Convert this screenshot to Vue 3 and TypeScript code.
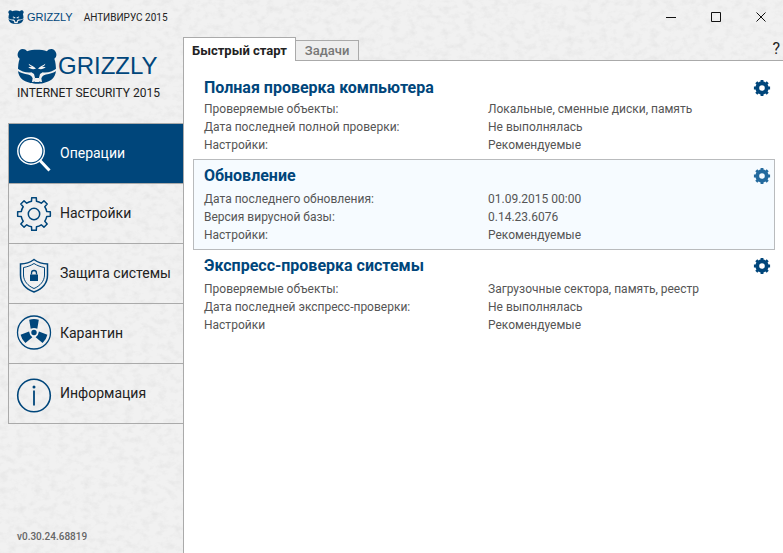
<script setup lang="ts">
import { ref } from 'vue'

interface Row {
  label: string
  value: string
}

interface Task {
  id: string
  title: string
  compact?: boolean
  rows: Row[]
}

const navItems = [
  { id: 'operations', label: 'Операции' },
  { id: 'settings', label: 'Настройки' },
  { id: 'protection', label: 'Защита системы' },
  { id: 'quarantine', label: 'Карантин' },
  { id: 'info', label: 'Информация' },
]

const tabs = ['Быстрый старт', 'Задачи']

const tasks: Task[] = [
  {
    id: 'full',
    title: 'Полная проверка компьютера',
    compact: true,
    rows: [
      { label: 'Проверяемые объекты:', value: 'Локальные, сменные диски, память' },
      { label: 'Дата последней полной проверки:', value: 'Не выполнялась' },
      { label: 'Настройки:', value: 'Рекомендуемые' },
    ],
  },
  {
    id: 'update',
    title: 'Обновление',
    rows: [
      { label: 'Дата последнего обновления:', value: '01.09.2015 00:00' },
      { label: 'Версия вирусной базы:', value: '0.14.23.6076' },
      { label: 'Настройки:', value: 'Рекомендуемые' },
    ],
  },
  {
    id: 'express',
    title: 'Экспресс-проверка системы',
    rows: [
      { label: 'Проверяемые объекты:', value: 'Загрузочные сектора, память, реестр' },
      { label: 'Дата последней экспресс-проверки:', value: 'Не выполнялась' },
      { label: 'Настройки', value: 'Рекомендуемые' },
    ],
  },
]

const activeNav = ref('operations')
const activeTab = ref(0)
const activeTask = ref('update')

// Outline of an eight-toothed gear; spans are half-angles in degrees.
function gear(cx: number, cy: number, outer: number, inner: number, tip: number, root: number): string {
  const at = (r: number, deg: number) => {
    const a = (deg * Math.PI) / 180
    return `${(cx + r * Math.sin(a)).toFixed(2)} ${(cy - r * Math.cos(a)).toFixed(2)}`
  }
  let d = ''
  for (let i = 0; i < 8; i++) {
    const c = i * 45
    d += `${i ? 'L' : 'M'}${at(inner, c - root)}L${at(outer, c - tip)}L${at(outer, c + tip)}L${at(inner, c + root)}`
    d += `A${inner} ${inner} 0 0 1 ${at(inner, c + 45 - root)}`
  }
  return d + 'Z'
}

const navGear = gear(18, 22, 16.5, 13, 8, 11)
const taskGear = gear(8, 8, 8.2, 6.6, 10, 13)
</script>

<template>
  <div class="window">
    <svg class="texture" aria-hidden="true">
      <filter id="plaster" x="0" y="0" width="100%" height="100%">
        <feTurbulence type="fractalNoise" baseFrequency="0.12 0.16" numOctaves="5" seed="8" />
        <feColorMatrix values="0 0 0 0 0.4  0 0 0 0 0.4  0 0 0 0 0.4  0.3 0 0 0 -0.13" />
      </filter>
      <rect width="100%" height="100%" filter="url(#plaster)" />
    </svg>

    <svg class="defs" aria-hidden="true">
      <symbol id="bear" viewBox="0 0 120 106">
        <path fill="#00467b" d="M8 31C3 27 1 22 2 16 4 7 10 2 17 2c6 0 10 2 13 7C39 5 50 4 60 4s21 1 30 5c3-5 7-7 13-7 7 0 13 5 15 14 1 6-1 11-6 15 4 10 5 24 5 36-1 10-5 19-12 26-7 6-16 9-25 11-7 2-13 2-20 2s-13 0-20-2c-9-2-18-5-25-11C8 86 4 77 3 67 3 55 4 41 8 31z" />
        <path fill="#f1f1f1" d="M0 60C13 70 29 74 43 72l8 5 3 11-4 13h-5l2-11c-3-8-10-12-22-13C14 75 6 71 0 66zM120 60C107 70 91 74 77 72l-8 5-3 11 4 13h5l-2-11c3-8 10-12 22-13 11-2 19-6 25-11z" />
        <path fill="#f1f1f1" d="M35 46c7 6 17 7 22 15-9 3-18 1-23-5h11c-5-2-9-5-10-10zM85 46c-7 6-17 7-22 15 9 3 18 1 23-5H75c5-2 9-5 10-10zM53 89h14l3 7-3 5H53l-3-5z" />
      </symbol>
    </svg>

    <header class="titlebar">
      <svg class="mini-bear" aria-hidden="true"><use href="#bear" /></svg>
      <span class="mini-name">GRIZZLY</span>
      <span class="product">АНТИВИРУС 2015</span>
      <div class="controls">
        <button type="button" aria-label="Свернуть">
          <svg viewBox="0 0 12 12"><path d="M1 6.500H11" /></svg>
        </button>
        <button type="button" aria-label="Развернуть">
          <svg viewBox="0 0 12 12"><path d="M1.500 1.500H10.500V10.500H1.500Z" /></svg>
        </button>
        <button type="button" aria-label="Закрыть">
          <svg viewBox="0 0 12 12"><path d="M1.500 1.500L10.500 10.500M10.500 1.500L1.500 10.500" /></svg>
        </button>
      </div>
    </header>

    <div class="body">
      <aside class="sidebar">
        <div class="brand">
          <div class="brand-top">
            <svg class="big-bear" aria-hidden="true"><use href="#bear" /></svg>
            <span class="brand-name">GRIZZLY</span>
          </div>
          <div class="brand-sub">INTERNET SECURITY 2015</div>
        </div>

        <nav class="nav">
          <button
            v-for="item in navItems"
            :key="item.id"
            type="button"
            class="nav-item"
            :class="{ active: item.id === activeNav }"
            @click="activeNav = item.id"
          >
            <svg class="nav-icon" viewBox="0 0 36 44" aria-hidden="true">
              <g v-if="item.id === 'operations'">
                <circle cx="15" cy="19" r="13.200" stroke-width="1.400" />
                <circle cx="15" cy="19" r="11.300" class="solid" stroke="none" />
                <path d="M24 28.500L33.500 38.500" stroke-width="3" />
              </g>
              <g v-else-if="item.id === 'settings'">
                <path :d="navGear" stroke-width="1.500" stroke-linejoin="round" />
                <circle cx="18" cy="22" r="5.700" stroke-width="1.500" />
              </g>
              <g v-else-if="item.id === 'protection'">
                <path d="M18 7.500C14 10.500 9 12 4.500 12V23C4.500 31 10 37 18 40 26 37 31.500 31 31.500 23V12C27 12 22 10.500 18 7.500Z" stroke-width="1.500" />
                <path d="M18 11.500C15 13.500 11 15 7.500 15.500V23C7.500 29 12 34 18 36.500 24 34 28.500 29 28.500 23V15.500C25 15 21 13.500 18 11.500Z" />
                <rect x="14" y="22.500" width="8" height="6.500" class="solid" stroke="none" />
                <path d="M15.500 22.500V21A2.500 2.500 0 0 1 20.500 21V22.500" stroke-width="1.300" />
              </g>
              <g v-else-if="item.id === 'quarantine'">
                <circle cx="18" cy="20.500" r="16.500" stroke-width="1.300" />
                <circle cx="18" cy="20.500" r="2.700" class="solid" stroke="none" />
                <path
                  v-for="angle in [0, 120, 240]"
                  :key="angle"
                  class="solid"
                  stroke="none"
                  d="M13.200 7.800Q18 6.300 22.800 7.800L21.300 16.700Q18 15.300 14.700 16.700Z"
                  :transform="`rotate(${angle} 18 20.5)`"
                />
              </g>
              <g v-else>
                <circle cx="18" cy="23.500" r="16.300" stroke-width="1.600" />
                <path d="M18 18.500V33.500" stroke-width="1.800" />
                <circle cx="18" cy="15" r="1.500" class="solid" stroke="none" />
              </g>
            </svg>
            <span class="nav-label">{{ item.label }}</span>
          </button>
        </nav>

        <div class="version">v0.30.24.68819</div>
      </aside>

      <main class="main">
        <div class="tabs">
          <button
            v-for="(tab, i) in tabs"
            :key="tab"
            type="button"
            class="tab"
            :class="{ active: i === activeTab }"
            @click="activeTab = i"
          >
            {{ tab }}
          </button>
          <button type="button" class="help" aria-label="Справка">?</button>
        </div>

        <div class="panel">
          <section
            v-for="task in tasks"
            :key="task.id"
            class="task"
            :class="{ active: task.id === activeTask, compact: task.compact }"
            @click="activeTask = task.id"
          >
            <div class="task-head">
              <h2>{{ task.title }}</h2>
              <button type="button" class="task-gear" aria-label="Параметры">
                <svg viewBox="0 0 16 16"><path :d="taskGear + 'M10.800 8A2.800 2.800 0 1 0 5.200 8A2.800 2.800 0 1 0 10.800 8Z'" fill-rule="evenodd" /></svg>
              </button>
            </div>
            <dl>
              <div v-for="row in task.rows" :key="row.label" class="row">
                <dt>{{ row.label }}</dt>
                <dd>{{ row.value }}</dd>
              </div>
            </dl>
          </section>
        </div>
      </main>
    </div>
  </div>
</template>

<style>
body {
  margin: 0;
}
</style>

<style scoped>
.window {
  position: relative;
  isolation: isolate;
  display: flex;
  flex-direction: column;
  min-height: 100vh;
  background: #f1f1f1;
  color: #222;
  font-family: Roboto, 'Liberation Sans', sans-serif;
}
.texture {
  position: absolute;
  z-index: -1;
  inset: 0;
  width: 100%;
  height: 100%;
}
.defs {
  position: absolute;
  width: 0;
  height: 0;
}
button {
  margin: 0;
  padding: 0;
  border: 0;
  background: none;
  color: inherit;
  font: inherit;
  cursor: pointer;
}
.titlebar {
  display: flex;
  align-items: center;
  height: 34px;
  padding-left: 8px;
}
.mini-bear {
  width: 16px;
  height: 14px;
}
.mini-name {
  margin: 0 11px 0 3px;
  color: #00467b;
  font-family: 'Liberation Sans', sans-serif;
  font-size: 11px;
}
.product {
  font-size: 10px;
}
.controls {
  display: flex;
  margin-left: auto;
}
.controls button {
  display: grid;
  place-items: center;
  width: 45px;
  height: 34px;
}
.controls svg {
  width: 12px;
  height: 12px;
  fill: none;
  stroke: #111;
}
.body {
  display: flex;
  flex: 1;
}
.sidebar {
  display: flex;
  flex-direction: column;
  flex: none;
  box-sizing: border-box;
  width: 183px;
  padding-left: 8px;
}
.brand {
  height: 89px;
  padding-left: 9px;
  box-sizing: border-box;
  padding-top: 14px;
}
.brand-top {
  display: flex;
  align-items: center;
}
.big-bear {
  flex: none;
  width: 40px;
  height: 36px;
}
.brand-name {
  margin-left: 1px;
  color: #00467b;
  font-family: 'Liberation Sans', sans-serif;
  font-size: 24px;
  line-height: 36px;
}
.brand-sub {
  font-size: 12px;
  line-height: 18px;
  white-space: nowrap;
}
.nav {
  border: 1px solid #aaa;
  border-width: 1px 0 0 1px;
}
.nav-item {
  display: flex;
  align-items: center;
  gap: 8px;
  box-sizing: border-box;
  width: 100%;
  height: 60px;
  padding-left: 7px;
  border-bottom: 1px solid #aaa;
  font-size: 14px;
  white-space: nowrap;
}
.nav-label {
  padding-bottom: 2px;
}
.nav-item.active {
  background: #00467b;
  color: #fff;
}
.nav-icon {
  flex: none;
  width: 36px;
  height: 44px;
  fill: none;
  stroke: #00467b;
}
.nav-icon .solid {
  fill: #00467b;
}
.active .nav-icon {
  stroke: #fff;
}
.active .nav-icon .solid {
  fill: #fff;
}
.version {
  margin-top: auto;
  padding: 0 0 8px 9px;
  color: #666;
  font-size: 10px;
  font-weight: 500;
  line-height: 16px;
}
.main {
  display: flex;
  flex: 1;
  flex-direction: column;
  min-width: 0;
}
.tabs {
  display: flex;
  align-items: flex-end;
  height: 26px;
}
.tab {
  box-sizing: border-box;
  height: 20px;
  padding: 0 9px;
  border: 1px solid #aaa;
  border-left: 0;
  border-bottom: 0;
  background: #eee;
  color: #777;
  font-size: 13px;
  font-weight: 500;
  line-height: 20px;
}
.tab.active {
  z-index: 1;
  height: 24px;
  margin-bottom: -1px;
  padding: 0 8px;
  border-left: 1px solid #aaa;
  background: #fff;
  color: #222;
  font-weight: 700;
  line-height: 26px;
}
.help {
  margin-left: auto;
  padding: 0 3px 2px 8px;
  font-size: 16px;
  line-height: 18px;
}
.panel {
  flex: 1;
  padding: 11px 8px 0 9px;
  border: 1px solid #aaa;
  border-width: 1px 0 0 1px;
  background: #fff;
}
.task {
  margin-top: -1px;
  padding: 4px 4px 5px 10px;
  border: 1px solid transparent;
}
.task.active {
  border-color: #b9bbbd;
  background: #f6fbff;
}
.task-head {
  display: flex;
  align-items: center;
  justify-content: space-between;
  margin-bottom: 2px;
}
.compact .task-head {
  margin-bottom: 0;
}
h2 {
  margin: 0;
  color: #00467b;
  font-size: 16px;
  font-weight: 700;
  line-height: 24px;
}
.task-gear svg {
  display: block;
  overflow: visible;
  width: 16px;
  height: 16px;
  fill: #00467b;
}
.task.active .task-gear svg {
  fill: #246a9e;
}
dl {
  margin: 0;
  color: #555;
  font-size: 12px;
  line-height: 18px;
}
.row {
  display: grid;
  grid-template-columns: 284px 1fr;
}
dd {
  margin: 0;
}
</style>
